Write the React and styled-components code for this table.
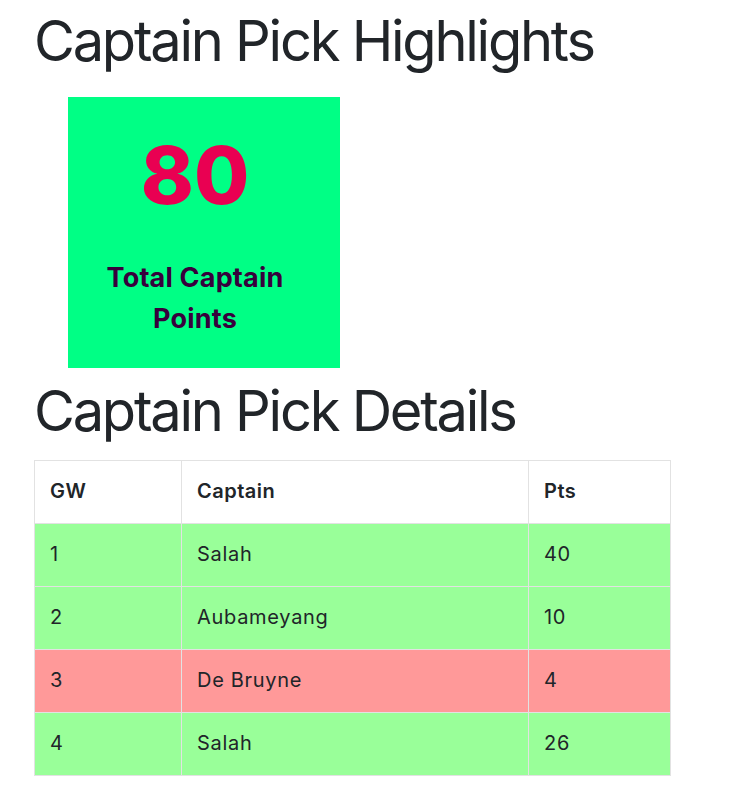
import styled, { createGlobalStyle } from "styled-components";

const Global = createGlobalStyle`
  body { margin:0; background:#fff; font-family: Inter, "Noto Sans", sans-serif; color:#212529; }
`;

const Page = styled.div` padding:8px 34px 16px; `;
const Title = styled.h1`
  margin:${p => p.$mt || 0}px 0 ${p => p.$mb || 0}px;
  font-size:56px; font-weight:400; line-height:1.2; letter-spacing:-2.25px;
`;
const Card = styled.div`
  width:272px; height:271px; margin-left:34px;
  background:#00ff85; box-sizing:border-box;
  display:flex; flex-direction:column; align-items:center;
  padding:30px 18px 0 0;
  .value{ color:#e90052; font-size:80px; font-weight:800; line-height:1.2; }
  .label{ color:#37003c; font-size:27px; font-weight:700; line-height:41px; text-align:center; margin-top:34px; letter-spacing:0.2px; }
`;
const Table = styled.table`
  width:636px; border-collapse:collapse; font-size:20px; table-layout:fixed;
  th, td { border:1px solid #e2e2e2; padding:15px 15px 15.5px; line-height:31.5px; text-align:left; letter-spacing:0.7px; box-sizing:border-box; }
  th { font-weight:600; background:#fff; letter-spacing:0.5px; }
  th:nth-child(1){ width:147px; }
  th:nth-child(2){ width:347px; }
  th:nth-child(3){ width:142px; }
`;
const Row = styled.tr` background:${p => p.$good ? "#99ff99" : "#ff9999"}; `;

const picks = [
  { gw: 1, name: "Salah", pts: 40 },
  { gw: 2, name: "Aubameyang", pts: 10 },
  { gw: 3, name: "De Bruyne", pts: 4 },
  { gw: 4, name: "Salah", pts: 26 },
];

export default function App() {
  return (
    <Page>
      <Global />
      <Title $mb={22}>Captain Pick Highlights</Title>
      <Card>
        <div className="value">80</div>
        <div className="label">Total Captain<br />Points</div>
      </Card>
      <Title $mt={10} $mb={15}>Captain Pick Details</Title>
      <Table>
        <thead>
          <tr><th>GW</th><th>Captain</th><th>Pts</th></tr>
        </thead>
        <tbody>
          {picks.map(p => (
            <Row key={p.gw} $good={p.pts >= 10}>
              <td>{p.gw}</td><td>{p.name}</td><td>{p.pts}</td>
            </Row>
          ))}
        </tbody>
      </Table>
    </Page>
  );
}
